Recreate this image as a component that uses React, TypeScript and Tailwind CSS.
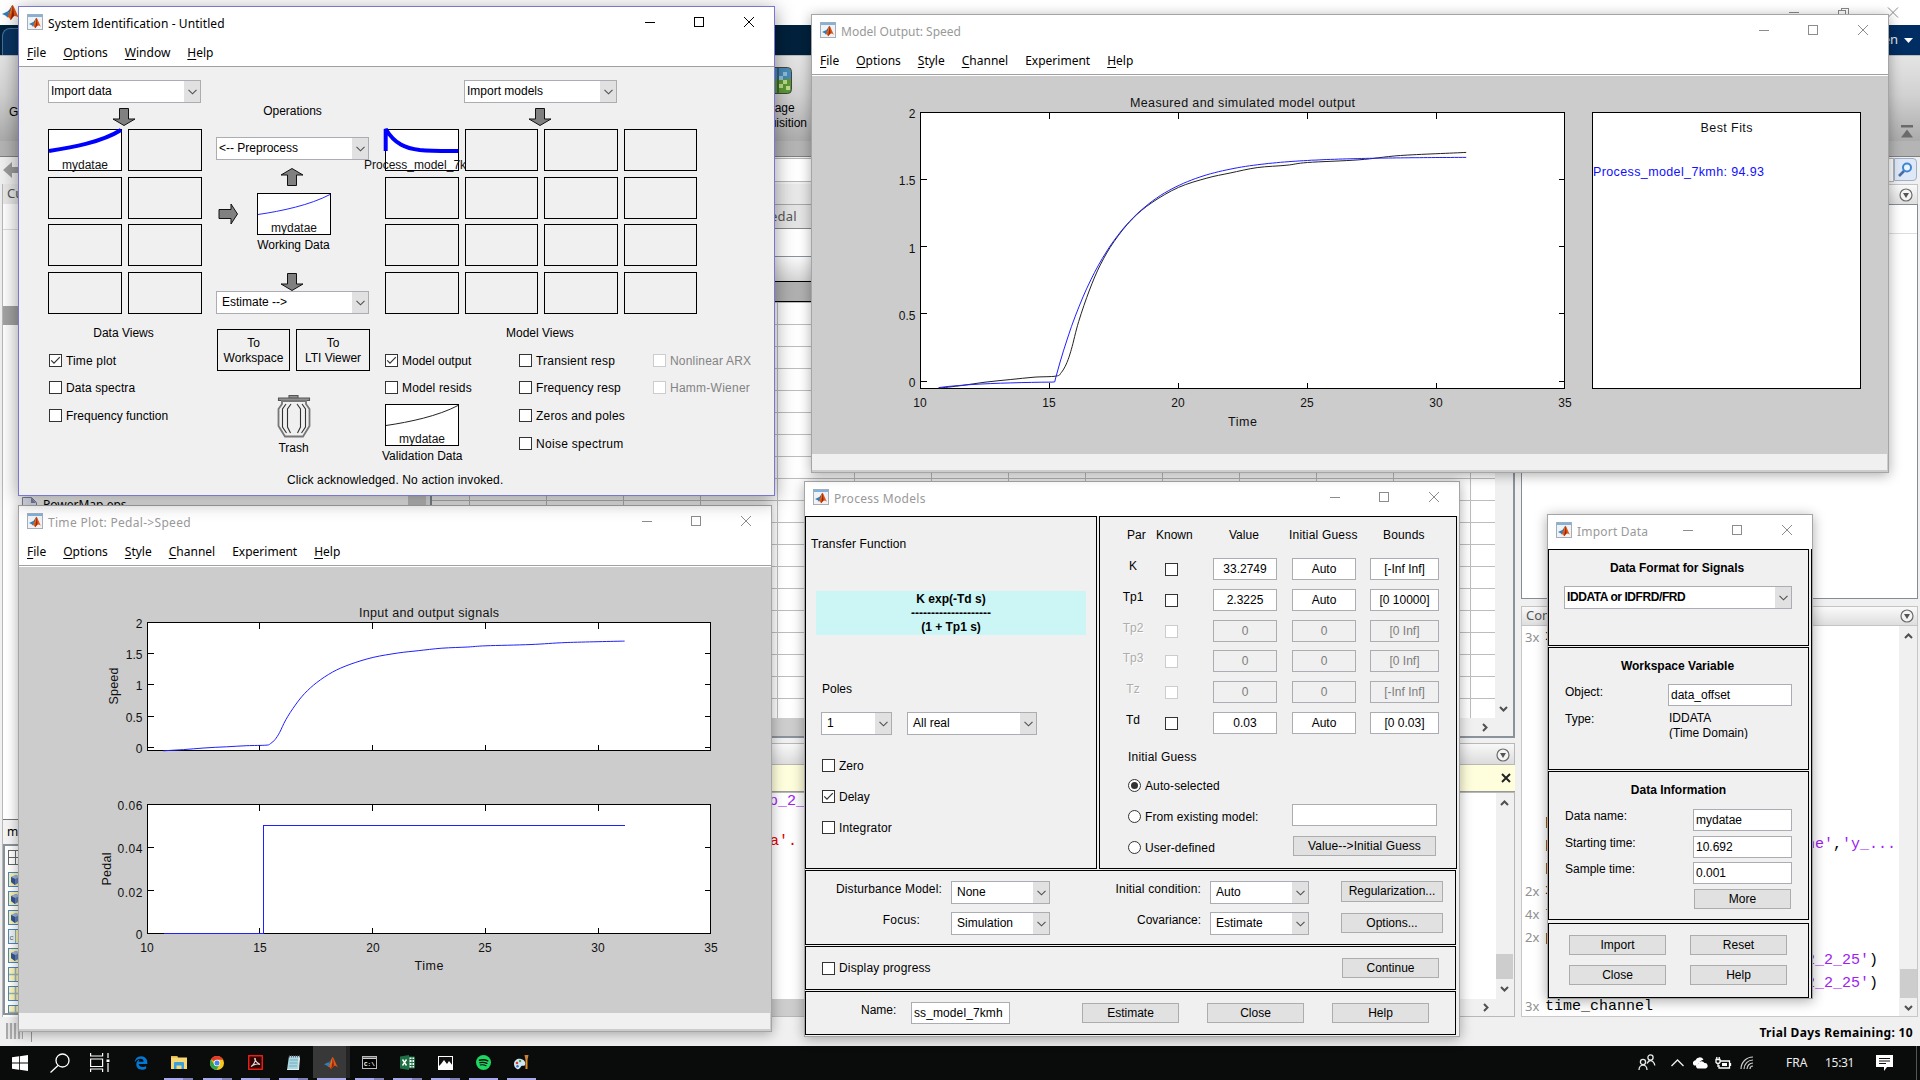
import React from "react";
import { FaEdgeLegacy } from "react-icons/fa6";

type Pt = [number, number];

/* ---------- shared drawing helpers ---------- */

function smooth(pts: Pt[]): string {
  let d = `M${pts[0][0].toFixed(1)} ${pts[0][1].toFixed(1)}`;
  for (let i = 0; i < pts.length - 1; i++) {
    const a = pts[Math.max(0, i - 1)];
    const b = pts[i];
    const c = pts[i + 1];
    const e = pts[Math.min(pts.length - 1, i + 2)];
    const k = 6;
    d += `C${(b[0] + (c[0] - a[0]) / k).toFixed(1)} ${(b[1] + (c[1] - a[1]) / k).toFixed(1)} ${(c[0] - (e[0] - b[0]) / k).toFixed(1)} ${(c[1] - (e[1] - b[1]) / k).toFixed(1)} ${c[0].toFixed(1)} ${c[1].toFixed(1)}`;
  }
  return d;
}

const measured: Pt[] = [
  [10.7, -0.05], [11.6, -0.03], [12.5, -0.005], [13.5, 0.015], [14.4, 0.032], [15.25, 0.04], [15.45, 0.065],
  [15.65, 0.13], [15.85, 0.24], [16.13, 0.446], [16.55, 0.68], [16.97, 0.867], [17.5, 1.04], [18.2, 1.207],
  [18.97, 1.33], [20, 1.443], [21.1, 1.512], [22, 1.55], [23.05, 1.59], [24.2, 1.608], [25, 1.628], [27, 1.648],
  [28.6, 1.68], [31.15, 1.703],
];

const simulated: Pt[] = (() => {
  const out: Pt[] = [];
  for (let t = 10.7; t < 15.15; t += 0.4) out.push([t, -0.045 * Math.exp(-(t - 10.7) / 1.9)]);
  out.push([15.2, -0.003]);
  for (let t = 15.25; t <= 31.2; t += 0.15) out.push([t, 1.668 * (1 - Math.exp(-(t - 15.2) / 2.3225))]);
  return out;
})();

const line = (pts: Pt[]) => "M" + pts.map((p) => `${p[0].toFixed(1)} ${p[1].toFixed(1)}`).join("L");

function MatlabGlyph({ size = 14 }: { size?: number }) {
  return (
    <svg width={size} height={size} viewBox="0 0 16 16">
      <path d="M0 9.300 5 7l2.800 2.200L5 12.600 3.600 11z" fill="#2f7fb8" />
      <path d="M5 7c1.800-.4 3.200-4 4.800-6L7.800 9.200z" fill="#3a5f8a" />
      <path d="M9.800 1C8.400 3 7.600 8 5 12.600c1.300-.6 2.200.6 3 2.400 1.600-.6 2.600-3.800 4-3.800 1.300 0 2.600.7 4 1.800C13.500 9 11.200 1 9.800 1z" fill="#dd5a12" />
      <path d="M9.800 1c.3 3-.2 8.500-1.800 14 1.500-1 2.200-3.600 3.400-3.900C11 7.500 10.600 2.500 9.800 1z" fill="#9c1f10" />
      <path d="M9.600 1.300C9 3.500 8.400 7 7.300 10c.9-1 1.900-5 2.300-8.700z" fill="#f9b13a" />
    </svg>
  );
}

function WindowIcon() {
  return (
    <div className="flex h-4 w-4 shrink-0 flex-col border border-[#a4aebb] bg-[#f1f2f5]">
      <div className="h-[2px] bg-[#7fb2dc]" />
      <div className="flex flex-1 items-center justify-center">
        <MatlabGlyph size={12} />
      </div>
    </div>
  );
}

function Caption({ color }: { color: string }) {
  return (
    <svg width="110" height="12" viewBox="0 0 110 12" fill="none" stroke={color} shapeRendering="crispEdges">
      <path d="M0 6.500h10M49.500 1.500h9v9h-9z" />
      <path d="M99 1l10 10M109 1L99 11" shapeRendering="auto" />
    </svg>
  );
}

interface WinProps {
  frame: string;
  title: string;
  titleClass?: string;
  active?: boolean;
  menu?: string[];
  titleH?: string;
  children: React.ReactNode;
}

/* menu entries with an "&" in front underline their first letter */
function Win({ frame, title, titleClass = "", active, menu, titleH = "h-[30px]", children }: WinProps) {
  return (
    <section
      className={
        "absolute flex flex-col border bg-white " +
        (active
          ? "border-[#7878d2] shadow-[0_4px_18px_rgba(0,0,0,0.42)] "
          : "border-[#a5a5a5] shadow-[0_2px_12px_rgba(0,0,0,0.33)] ") +
        frame
      }
    >
      <header className={"flex shrink-0 items-start pl-2 pr-[19px] " + titleH}>
        <div className="pt-[7px]">
          <WindowIcon />
        </div>
        <h1
          className={
            "ml-[5px] flex-1 whitespace-nowrap pt-[8px] font-['Noto_Sans',sans-serif] text-[12px] leading-[18px] " +
            (active ? "text-black " : "text-[#999] ") +
            titleClass
          }
        >
          {title}
        </h1>
        <div className="pt-[9px]">
          <Caption color={active ? "#000" : "#8c8c8c"} />
        </div>
      </header>
      {menu && (
        <nav className="flex h-[30px] shrink-0 gap-[17px] border-b border-[#a0a0a0] pl-2 pt-[7px] font-['Noto_Sans',sans-serif] text-[12px] leading-[18px]">
          {menu.map((m) =>
            m.startsWith("&") ? (
              <span key={m}>
                <span className="underline underline-offset-2">{m[1]}</span>
                {m.slice(2)}
              </span>
            ) : (
              <span key={m}>{m}</span>
            ),
          )}
        </nav>
      )}
      {children}
    </section>
  );
}

/* ---------- form controls ---------- */

function Select({ text, className = "", pad = "pl-[5px]" }: { text: string; className?: string; pad?: string }) {
  return (
    <div className={"flex h-[23px] shrink-0 border border-[#abadb3] bg-white " + className}>
      <span className={"flex-1 whitespace-nowrap leading-[21px] " + pad}>{text}</span>
      <span className="flex w-4 items-center justify-center bg-[#e1e1e1]">
        <svg width="9" height="6" viewBox="0 0 9 6" fill="none" stroke="#505050" strokeWidth="1.1">
          <path d="M.5.8l4 4 4-4" />
        </svg>
      </span>
    </div>
  );
}

function Box({ on, off }: { on?: boolean; off?: boolean }) {
  return (
    <span className={"flex h-[13px] w-[13px] shrink-0 items-center justify-center border bg-white " + (off ? "border-[#ccc]" : "border-[#333]")}>
      {on && (
        <svg width="11" height="11" viewBox="0 0 11 11" fill="none" stroke="#333" strokeWidth="1.2">
          <path d="M1.200 5.300l2.800 2.900 5.800-6" />
        </svg>
      )}
    </span>
  );
}

function Check({ label, on, off, className = "" }: { label: string; on?: boolean; off?: boolean; className?: string }) {
  return (
    <div className={"flex h-[13px] items-center gap-1 whitespace-nowrap " + (off ? "text-[#838383] " : "") + className}>
      <Box on={on} off={off} />
      <span>{label}</span>
    </div>
  );
}

function Radio({ label, on }: { label: string; on?: boolean }) {
  return (
    <div className="flex h-[13px] items-center gap-1 whitespace-nowrap">
      <span className="flex h-[13px] w-[13px] items-center justify-center rounded-full border border-[#333] bg-white">
        {on && <span className="h-[7px] w-[7px] rounded-full bg-[#333]" />}
      </span>
      <span className="pt-px tracking-[0.1px]">{label}</span>
    </div>
  );
}

function Field({ text = "", className = "", off }: { text?: string; className?: string; off?: boolean }) {
  return (
    <div
      className={
        "h-[22px] shrink-0 overflow-hidden whitespace-nowrap border border-[#abadb3] leading-[21px] " +
        (off ? "bg-[#f0f0f0] text-[#7d7d7d] " : "bg-white ") +
        className
      }
    >
      {text}
    </div>
  );
}

function Btn({ text, className = "h-[20px] w-[97px]" }: { text: string; className?: string }) {
  return (
    <div className={"shrink-0 whitespace-nowrap border border-[#adadad] bg-[#e1e1e1] text-center leading-[19px] " + className}>
      {text}
    </div>
  );
}

/* ---------- System Identification window ---------- */

function Arrow({ dir, className = "" }: { dir: "down" | "up" | "right"; className?: string }) {
  const rot = dir === "down" ? "" : dir === "up" ? "rotate(180 12 9)" : "";
  return dir === "right" ? (
    <svg className={className} width="21" height="22" viewBox="0 0 21 22">
      <path d="M1 6.500h12V1l6.500 10L13 21v-5.500H1z" fill="#808080" stroke="#111" />
    </svg>
  ) : (
    <svg className={className} width="24" height="18" viewBox="0 0 24 18">
      <path transform={rot} d="M7.500.5h9v10.500h6.500L12 17.500 1 11h6.500z" fill="#808080" stroke="#111" />
    </svg>
  );
}

function Slot({ kind, name }: { kind?: "data" | "model"; name?: string }) {
  return (
    <div className={"relative h-[42px] border border-black " + (kind ? "bg-white" : "")}>
      {kind && (
        <svg className="absolute -left-[2px] -top-[4px] overflow-visible" width="76" height="30" viewBox="0 0 76 30" fill="none" stroke="#0000ff" strokeWidth="4">
          {kind === "data" ? <path d="M2 25c22-3.500 52-8.500 72-21" /> : <path d="M1.700 25V3c9 15 20 19.500 34 21 12 1.200 24 1 38.500 1" strokeLinejoin="bevel" />}
        </svg>
      )}
      {name && (
        <span className={"absolute top-[28px] whitespace-nowrap text-[12px] leading-[14px] text-[#111] " + (kind === "model" ? "-left-[22px] w-[103px]" : "left-[13px]")}>
          {name}
        </span>
      )}
    </div>
  );
}

function Preview({ color }: { color: string }) {
  return (
    <div className="relative h-[42px] w-[74px] border border-black bg-white">
      <svg className="absolute left-0 top-0" width="72" height="40" viewBox="0 0 72 40" fill="none" stroke={color}>
        <path d="M0 20.500C24 17 52 11 72 .5" />
      </svg>
      <span className="absolute left-[13px] top-[27px] leading-[14px] text-[#111]">mydatae</span>
    </div>
  );
}

function Trash() {
  return (
    <svg width="34" height="45" viewBox="0 0 34 45" fill="none" stroke="#333" strokeWidth="1.100">
      <path d="M12 1.500h9v2.500h-9zM1.500 4h31v2.500h-31z" fill="#909090" stroke="#555" />
      <path d="M5 7v3l-3.500 5v17L8 42.500h18l6.500-10.500V15L29 10V7z" stroke="#777" strokeWidth="1.800" />
      <path d="M9 10l-3.500 5v18l4 6M14 10l-3.500 5v18l3 6M20 10l3.500 5v18l-3 6M25 10l3.500 5v18l-4 6" />
    </svg>
  );
}

function SystemId() {
  return (
    <Win
      frame="left-[18px] top-[6px] h-[490px] w-[757px]"
      title="System Identification - Untitled"
      titleClass="tracking-[0.08px]"
      active
      menu={["&File", "&Options", "&Window", "&Help"]}
    >
      <div className="flex flex-1 flex-col bg-[#f0f0f0] pl-[29px] pt-[13px]">
        <div className="flex h-[386px]">
          <div className="flex w-[154px] flex-col">
            <Select text="Import data" className="w-[153px]" pad="pl-[2px]" />
            <Arrow dir="down" className="ml-[64px] mt-[5px]" />
            <div className="mt-[3px] grid grid-cols-[74px_74px] gap-x-[6px] gap-y-[5.700px]">
              <Slot kind="data" name="mydatae" />
              {Array.from({ length: 7 }, (_, i) => (
                <Slot key={i} />
              ))}
            </div>
            <div className="mt-[11px] pr-[3px] text-center leading-[16px]">Data Views</div>
            <div className="mt-[13px] flex flex-col pl-[1px]">
              <Check label="Time plot" on className="tracking-[0.15px]" />
              <Check label="Data spectra" className="mt-[14px] tracking-[0.1px]" />
              <Check label="Frequency function" className="mt-[15px]" />
            </div>
          </div>
          <div className="ml-[14px] flex w-[155px] flex-col items-center">
            <div className="mt-[23px] pr-[2px] leading-[16px]">Operations</div>
            <Select text="<-- Preprocess" className="-ml-[2px] mt-[18px] w-[153px]" pad="pl-[2px]" />
            <Arrow dir="up" className="-ml-[3px] mt-[8px]" />
            <div className="mt-[7px] flex w-full items-center">
              <Arrow dir="right" className="ml-[2px]" />
              <div className="ml-[18px]">
                <Preview color="#2828ff" />
              </div>
            </div>
            <div className="mt-[2px] leading-[16px]">Working Data</div>
            <Arrow dir="down" className="-ml-[3px] mt-[20px]" />
            <Select text="Estimate -->" className="-ml-[2px] w-[153px]" />
            <div className="mt-[15px] flex gap-[6px] text-center leading-[15px]">
              <div className="h-[42px] w-[73px] border border-black pt-[6px]">
                To
                <br />
                Workspace
              </div>
              <div className="h-[42px] w-[74px] border border-black pt-[6px]">
                To
                <br />
                LTI Viewer
              </div>
            </div>
            <div className="mt-[23px]">
              <Trash />
            </div>
            <div className="mt-px leading-[16px]">Trash</div>
          </div>
          <div className="ml-[14px] flex w-[320px] flex-col">
            <Select text="Import models" className="ml-[79px] w-[153px]" pad="pl-[2px]" />
            <Arrow dir="down" className="ml-[143px] mt-[5px]" />
            <div className="mt-[3px] grid grid-cols-[74px_73px_74px_73px] gap-x-[6px] gap-y-[5.700px]">
              <Slot kind="model" name="Process_model_7kmh" />
              {Array.from({ length: 15 }, (_, i) => (
                <div key={i} className="relative bg-[#f0f0f0]">
                  <Slot />
                </div>
              ))}
            </div>
            <div className="mt-[11px] pl-[121px] leading-[16px]">Model Views</div>
            <div className="mt-[13px] grid grid-cols-[134px_134px_1fr]">
              <div>
                <Check label="Model output" on />
                <Check label="Model resids" className="mt-[14px] tracking-[0.15px]" />
                <div className="mt-[10px]">
                  <Preview color="#222" />
                </div>
                <div className="-ml-[3px] mt-[2px] leading-[16px]">Validation Data</div>
              </div>
              <div>
                <Check label="Transient resp" className="tracking-[0.2px]" />
                <Check label="Frequency resp" className="mt-[14px] tracking-[0.1px]" />
                <Check label="Zeros and poles" className="mt-[15px] tracking-[0.2px]" />
                <Check label="Noise spectrum" className="mt-[15px] tracking-[0.3px]" />
              </div>
              <div>
                <Check label="Nonlinear ARX" off className="tracking-[0.2px]" />
                <Check label="Hamm-Wiener" off className="mt-[14px] tracking-[0.25px]" />
              </div>
            </div>
          </div>
        </div>
        <div className="mt-[6px] pl-[239px] leading-[16px] tracking-[0.130px]">Click acknowledged. No action invoked.</div>
      </div>
    </Win>
  );
}

/* ---------- charts ---------- */

interface AxesProps {
  x0: number;
  x1: number;
  y0: number;
  y1: number;
  xt: number[];
  yt: number[];
}

function Axes({ x0, x1, y0, y1, xt, yt }: AxesProps) {
  return (
    <g shapeRendering="crispEdges" stroke="#000">
      <rect x={x0} y={y0} width={x1 - x0} height={y1 - y0} fill="#fff" />
      {xt.map((x) => (
        <path key={x} d={`M${x} ${y0}v6M${x} ${y1}v-6`} />
      ))}
      {yt.map((y) => (
        <path key={y} d={`M${x0} ${y}h6M${x1} ${y}h-6`} />
      ))}
    </g>
  );
}

function ModelOutput() {
  const X = (t: number) => 108.5 + (t - 10) * 25.8;
  const Y = (v: number) => 36.5 + (2 - v) * 134.5;
  const m = (p: Pt): Pt => [X(p[0]), Y(p[1])];
  return (
    <Win frame="left-[811px] top-[14px] h-[459px] w-[1078px]" title="Model Output: Speed" menu={["&File", "&Options", "&Style", "&Channel", "Experiment", "&Help"]}>
      <div className="mt-px flex h-[378px] shrink-0 bg-[#ccc]">
        <svg width="1076" height="378" viewBox="0 0 1076 378" fontFamily="Liberation Sans, Arial, sans-serif" fontSize="12" fill="#111">
          <Axes x0={108.5} x1={752.5} y0={36.5} y1={312.5} xt={[237.5, 366.5, 495.5, 624.5]} yt={[103.5, 170.5, 237.5, 305.5]} />
          <path d={smooth(measured.map(m))} fill="none" stroke="#222" />
          <path d={line(simulated.map(m))} fill="none" stroke="#2020ff" />
          <text x="430.500" y="31" textAnchor="middle" textLength="225" fontSize="12.500">Measured and simulated model output</text>
          {["2", "1.5", "1", "0.5", "0"].map((s, i) => (
            <text key={s} x="103.500" y={[42, 109, 177, 244, 311][i]} textAnchor="end">{s}</text>
          ))}
          {["10", "15", "20", "25", "30", "35"].map((s, i) => (
            <text key={s} x={[108, 237, 366, 495, 624, 753][i]} y="331" textAnchor="middle">{s}</text>
          ))}
          <text x="430.500" y="349.500" textAnchor="middle" textLength="29" fontSize="12.500">Time</text>
          <rect x="780.500" y="36.500" width="268" height="276" fill="#fff" stroke="#000" shapeRendering="crispEdges" />
          <text x="914.500" y="56" textAnchor="middle" textLength="52" fontSize="12.500">Best Fits</text>
          <text x="781" y="100" fill="#1010ff" textLength="171" fontSize="12.500">Process_model_7kmh: 94.93</text>
        </svg>
      </div>
      <div className="flex-1 border-b-2 border-r border-[#ccc] bg-[#f0f0f0]" />
    </Win>
  );
}

function TimePlot() {
  const X = (t: number) => 128.5 + (t - 10) * 22.56;
  const Y = (v: number) => 55.5 + (2 - v) * 62.6;
  const xt = [240.5, 353.5, 466.5, 579.5];
  return (
    <Win
      frame="left-[18px] top-[505px] h-[527px] w-[754px]"
      title="Time Plot: Pedal->Speed"
      titleClass="tracking-[0.3px]"
      menu={["&File", "&Options", "&Style", "&Channel", "Experiment", "&Help"]}
    >
      <div className="mt-px flex h-[446px] shrink-0 bg-[#ccc]">
        <svg width="752" height="446" viewBox="0 0 752 446" fontFamily="Liberation Sans, Arial, sans-serif" fontSize="12" fill="#111">
          <Axes x0={128.5} x1={691.5} y0={55.5} y1={183.5} xt={xt} yt={[86.5, 117.5, 149.5, 180.5]} />
          <path d={smooth(measured.map((p): Pt => [X(p[0]), Y(p[1])]))} fill="none" stroke="#2020ff" />
          <Axes x0={128.5} x1={691.5} y0={237.5} y1={366.5} xt={xt} yt={[280.5, 323.5]} />
          <path d="M144.500 366.500h100V258.500h361" fill="none" stroke="#2020ff" shapeRendering="crispEdges" />
          <text x="410" y="50" textAnchor="middle" textLength="140" fontSize="12.500">Input and output signals</text>
          {["2", "1.5", "1", "0.5", "0"].map((s, i) => (
            <text key={s} x="123.500" y={[61, 92, 123, 155, 186][i]} textAnchor="end">{s}</text>
          ))}
          {["0.06", "0.04", "0.02", "0"].map((s, i) => (
            <text key={s} x="123.500" y={[243, 286, 330, 372][i]} textAnchor="end" textLength={s.length > 1 ? 25 : undefined}>{s}</text>
          ))}
          {["10", "15", "20", "25", "30", "35"].map((s, i) => (
            <text key={s} x={[128, 241, 354, 466, 579, 692][i]} y="385" textAnchor="middle">{s}</text>
          ))}
          <text x="410" y="403" textAnchor="middle" textLength="29" fontSize="12.500">Time</text>
          <text transform="translate(99 119) rotate(-90)" textAnchor="middle" textLength="37" fontSize="12.500">Speed</text>
          <text transform="translate(91.500 302) rotate(-90)" textAnchor="middle" textLength="33" fontSize="12.500">Pedal</text>
        </svg>
      </div>
      <div className="flex-1 border-b-2 border-r border-[#ccc] bg-[#f0f0f0]" />
    </Win>
  );
}

/* ---------- Process Models window ---------- */

const params: { p: string; v: string; g: string; b: string; off?: boolean }[] = [
  { p: "K", v: "33.2749", g: "Auto", b: "[-Inf Inf]" },
  { p: "Tp1", v: "2.3225", g: "Auto", b: "[0 10000]" },
  { p: "Tp2", v: "0", g: "0", b: "[0 Inf]", off: true },
  { p: "Tp3", v: "0", g: "0", b: "[0 Inf]", off: true },
  { p: "Tz", v: "0", g: "0", b: "[-Inf Inf]", off: true },
  { p: "Td", v: "0.03", g: "Auto", b: "[0 0.03]" },
];

function ProcessModels() {
  return (
    <Win frame="left-[804px] top-[481px] h-[556px] w-[656px]" title="Process Models" titleH="h-[34px]" titleClass="tracking-[0.3px]">
      <div className="flex flex-1 flex-col bg-[#f0f0f0]">
        <div className="flex h-[353px] gap-[2px]">
          <div className="flex w-[292px] flex-col border border-black">
            <div className="mt-[19px] pl-[5px] leading-[16px] tracking-[0.1px]">Transfer Function</div>
            <div className="ml-[10px] mt-[39px] h-[44px] w-[270px] bg-[#ccf5f5] pt-px text-center font-bold leading-[14px] text-black">
              <div>K exp(-Td s)</div>
              <div>--------------------</div>
              <div>(1 + Tp1 s)</div>
            </div>
            <div className="mt-[46px] pl-[16px] leading-[16px]">Poles</div>
            <div className="mt-[15px] flex gap-[15px] pl-[15px]">
              <Select text="1" className="w-[71px]" />
              <Select text="All real" className="w-[130px]" />
            </div>
            <div className="mt-[24px] flex flex-col gap-[18px] pl-[16px]">
              <Check label="Zero" />
              <Check label="Delay" on />
              <Check label="Integrator" className="tracking-[0.150px]" />
            </div>
          </div>
          <div className="flex w-[358px] flex-col border border-black pl-[13px]">
            <div className="mt-[10px] flex leading-[16px]">
              <span className="w-[29px] pl-[14px]">Par</span>
              <span className="ml-[14px] w-[38px]">Known</span>
              <span className="ml-[35px] w-[32px]">Value</span>
              <span className="ml-[28px] w-[69px] whitespace-nowrap tracking-[0.200px]">Initial Guess</span>
              <span className="ml-[25px] tracking-[0.150px]">Bounds</span>
            </div>
            <div className="mt-[15px] flex flex-col gap-[8.800px]">
              {params.map((r) => (
                <div key={r.p} className="flex h-[22px]">
                  <span className={"w-[40px] text-center leading-[16px] " + (r.off ? "text-[#adadad] [text-shadow:1px_1px_0_#fff]" : "")}>{r.p}</span>
                  <span className="ml-[12px] mt-[5px]">
                    <Box off={r.off} />
                  </span>
                  <Field text={r.v} off={r.off} className="ml-[35px] w-[64px] text-center" />
                  <Field text={r.g} off={r.off} className="ml-[15px] w-[64px] text-center" />
                  <Field text={r.b} off={r.off} className="ml-[14px] w-[69px] text-center" />
                </div>
              ))}
            </div>
            <div className="mt-[15px] pl-[15px] leading-[16px] tracking-[0.200px]">Initial Guess</div>
            <div className="mt-[14px] flex pl-[15px]">
              <div className="flex w-[164px] flex-col gap-[18px]">
                <Radio label="Auto-selected" on />
                <Radio label="From existing model:" />
                <Radio label="User-defined" />
              </div>
              <div className="flex flex-col gap-[10px] pt-[25px]">
                <Field className="w-[145px]" />
                <Btn text="Value-->Initial Guess" className="ml-px h-[20px] w-[143px] tracking-[0.100px]" />
              </div>
            </div>
          </div>
        </div>
        <div className="mt-px flex h-[75px] w-[651px] border border-black pt-[10px]">
          <div className="flex w-[136px] flex-col items-end leading-[16px]">
            <span className="whitespace-nowrap tracking-[0.150px]">Disturbance Model:</span>
            <span className="mt-[15px] pr-[22px] tracking-[0.200px]">Focus:</span>
          </div>
          <div className="ml-[9px] flex flex-col gap-[8px]">
            <Select text="None" className="w-[99px]" />
            <Select text="Simulation" className="w-[99px]" />
          </div>
          <div className="ml-[50px] flex w-[101px] flex-col items-end leading-[16px]">
            <span className="whitespace-nowrap tracking-[0.150px]">Initial condition:</span>
            <span className="mt-[15px]">Covariance:</span>
          </div>
          <div className="ml-[9px] flex flex-col gap-[8px]">
            <Select text="Auto" className="w-[99px]" />
            <Select text="Estimate" className="w-[99px]" />
          </div>
          <div className="ml-[32px] flex flex-col gap-[11px]">
            <Btn text="Regularization..." className="h-[21px] w-[102px]" />
            <Btn text="Options..." className="h-[20px] w-[102px]" />
          </div>
        </div>
        <div className="mt-px flex h-[44px] w-[651px] items-center justify-between border border-black pl-[16px] pr-[16px]">
          <Check label="Display progress" className="tracking-[0.150px]" />
          <Btn text="Continue" />
        </div>
        <div className="mt-px flex h-[44px] w-[651px] items-start border border-black pl-[55px] pt-[9px]">
          <span className="w-[40px] leading-[18px]">Name:</span>
          <Field text="ss_model_7kmh" className="ml-[10px] mt-px w-[99px] pl-[2px] tracking-[0.1px]" />
          <div className="ml-[72px] mt-[2px] flex gap-[28px]">
            <Btn text="Estimate" />
            <Btn text="Close" />
            <Btn text="Help" />
          </div>
        </div>
      </div>
    </Win>
  );
}

/* ---------- Import Data window ---------- */

function ImportData() {
  return (
    <Win frame="left-[1547px] top-[514px] h-[485px] w-[266px]" title="Import Data" titleH="h-[34px]" titleClass="tracking-[0.2px]">
      <div className="flex flex-1 bg-[#f0f0f0]">
        <div className="flex w-[261px] flex-col">
          <div className="flex h-[97px] flex-col border border-black">
            <div className="mt-[10px] pr-[3px] text-center font-bold leading-[16px] tracking-[-0.050px]">Data Format for Signals</div>
            <Select text="IDDATA or IDFRD/FRD" className="ml-[15px] mt-[10px] w-[228px] font-bold tracking-[-0.430px]" pad="pl-[2px]" />
          </div>
          <div className="mt-px flex h-[123px] flex-col border border-black">
            <div className="mt-[10px] pr-[2px] text-center font-bold leading-[16px]">Workspace Variable</div>
            <div className="mt-[10px] flex pl-[16px]">
              <span className="w-[103px] leading-[16px]">Object:</span>
              <Field text="data_offset" className="w-[124px] pl-[2px]" />
            </div>
            <div className="mt-[5px] flex pl-[16px]">
              <span className="w-[104px] leading-[16px]">Type:</span>
              <div className="h-[28px] overflow-hidden leading-[15px]">
                IDDATA
                <br />
                (Time Domain)
              </div>
            </div>
          </div>
          <div className="mt-px flex h-[149px] flex-col border border-black">
            <div className="mt-[10px] text-center font-bold leading-[16px]">Data Information</div>
            <div className="mt-[11px] flex flex-col gap-[4.500px] pl-[16px]">
              {[
                ["Data name:", "mydatae"],
                ["Starting time:", "10.692"],
                ["Sample time:", "0.001"],
              ].map(([a, b]) => (
                <div key={a} className="flex">
                  <span className="w-[128px] leading-[15px]">{a}</span>
                  <Field text={b} className="w-[99px] pl-[2px]" />
                </div>
              ))}
            </div>
            <Btn text="More" className="ml-[145px] mt-[5px] h-[20px] w-[97px]" />
          </div>
          <div className="mt-[3px] grid h-[75px] grid-cols-[97px_97px] content-start gap-x-[24px] gap-y-[10px] border border-black pl-[20px] pt-[11px]">
            <Btn text="Import" />
            <Btn text="Reset" />
            <Btn text="Close" />
            <Btn text="Help" />
          </div>
        </div>
        <div className="ml-[2px] w-px bg-black" />
      </div>
    </Win>
  );
}

/* ---------- MATLAB main window behind the dialogs ---------- */

function RoundMenu() {
  return (
    <svg width="14" height="14" viewBox="0 0 14 14">
      <circle cx="7" cy="7" r="6" fill="#f4f4f4" stroke="#6a6a6a" strokeWidth="1.200" />
      <path d="M4 5h6l-3 5z" fill="#555" />
    </svg>
  );
}

function Chevron({ d }: { d: string }) {
  return (
    <svg width="9" height="9" viewBox="0 0 9 9" fill="none" stroke="#505050" strokeWidth="2">
      <path d={d} />
    </svg>
  );
}

const UP = "M1 6l3.500-3.500L8 6";
const DOWN = "M1 3l3.500 3.500L8 3";
const RIGHT = "M3 1l3.500 3.500L3 8";

function CubeIcon() {
  return (
    <svg width="15" height="15" viewBox="0 0 15 15">
      <rect x=".5" y=".5" width="14" height="14" fill="#f7efb2" stroke="#4d88bd" />
      <path d="M3 5l5-2 4 2v5l-5 3-4-3z" fill="#5f7fb4" />
      <path d="M3 5l4 2 5-2-4-2z" fill="#9bb3d8" />
      <path d="M7 7v6l-4-3V5z" fill="#35558f" />
    </svg>
  );
}

function GridIcon({ plain, text }: { plain?: boolean; text?: string }) {
  return (
    <svg width="15" height="15" viewBox="0 0 15 15">
      <rect x=".5" y=".5" width="14" height="14" fill={plain ? "#fff" : text ? "#eef3f0" : "#fbf4ba"} stroke={plain ? "#666" : "#4d88bd"} />
      {text ? (
        <g>
          <rect x="7" y="1" width="7" height="13" fill="#f4eeb4" />
          <path d="M7.500 1v13" stroke="#8fb0b0" />
          <text x="1.500" y="11" fontSize="8" fontFamily="Liberation Sans, sans-serif" fill="#567">{text}</text>
        </g>
      ) : (
        <path d="M7.500 1v13M1 7.500h13" stroke={plain ? "#666" : "#9cb4b4"} strokeWidth={plain ? 1 : 1.600} />
      )}
    </svg>
  );
}

const history: { n?: string; l?: string; r?: React.ReactNode; pr?: string }[] = [
  { n: "3x", l: "x" },
  {}, {}, {}, {}, {}, {}, {},
  { l: "p" },
  { l: "p", r: (<><i className="not-italic text-[#a020f0]">ne'</i>,<i className="not-italic text-[#a020f0]">'y_...</i></>), pr: "pr-[3px]" },
  { l: "p" },
  { n: "2x", l: "x" },
  { n: "4x", l: "t" },
  { n: "2x", l: "p" },
  { r: (<><i className="not-italic text-[#a020f0]">2_2_25'</i>)</>), pr: "pr-[21px]" },
  { r: (<><i className="not-italic text-[#a020f0]">2_2_25'</i>)</>), pr: "pr-[21px]" },
  { n: "3x", l: "time_channel" },
];

function MainWindow() {
  return (
    <div className="flex h-[1046px] w-full flex-col bg-[#f0f0f0] font-['Noto_Sans',sans-serif] text-[12px] text-black">
      <div className="flex h-[25px] items-center justify-between bg-white pl-[2px] pr-[21px]">
        <MatlabGlyph size={17} />
        <svg width="110" height="14" viewBox="0 0 110 14" fill="none" stroke="#888">
          <path d="M0 6.500h10M49.500 4.500h7v7h-7zM52 4.500v-2h7v7h-2.500" shapeRendering="crispEdges" />
          <path d="M99 1.500l10 10M109 1.500l-10 10" />
        </svg>
      </div>
      <div className="flex h-[30px] items-end justify-between bg-[linear-gradient(90deg,#00213c_0,#00213c_50%,#002d62_95%)]">
        <div className="ml-[2px] h-[27px] w-[120px] rounded-tl-lg border-l border-t border-[#46719b] bg-[#0a3360]" />
        <div className="flex h-[30px] items-center gap-[6px] pr-[7px] text-[13px] text-[#e8e8e8]">
          Open
          <svg width="9" height="5" viewBox="0 0 9 5">
            <path d="M0 0h9L4.500 5z" fill="#fff" />
          </svg>
        </div>
      </div>
      <div className="flex h-[86px] border-t border-[#bbb] bg-[linear-gradient(#e4e4e4,#d2d2d2_45%,#ababab)] pt-[11px]">
        <span className="w-[60px] pl-[9px] pt-[36px] font-['Liberation_Sans',sans-serif]">Get</span>
        <div className="ml-[673px] flex w-[90px] flex-col items-center font-['Liberation_Sans',sans-serif] leading-[15px]">
          <svg width="28" height="27" viewBox="0 0 28 27">
            <rect x=".5" y=".5" width="27" height="26" rx="4" fill="#5c9a35" stroke="#444" />
            <path d="M1 4q1-3 4-3h18q3 0 4 3v8H1z" fill="#4a8ab8" />
            <path d="M15 9h4v4h-4zM19 5h4v4h-4z" fill="#8fc0dc" />
            <path d="M15 17h4v4h-4zM19 13h4v4h-4zM22 19h4v4h-4z" fill="#bfdc8c" />
            <path d="M14 1v25" stroke="#234" />
          </svg>
          <span className="mt-[7px]">Image</span>
          <span>Acquisition</span>
        </div>
        <div className="ml-auto flex items-end pb-[3px] pr-[7px]">
          <svg width="12" height="13" viewBox="0 0 12 13">
            <path d="M0 0h12v2.500H0zM6 4.500L12 12.500H0z" fill="#6a6a6a" />
          </svg>
        </div>
      </div>
      <div className="h-[16px] border-b border-[#7f7f7f] bg-[#b4b4b4]" />
      <div className="flex h-[25px] items-center justify-between bg-[#f0f0f0] pl-[3px] pr-[3px]">
        <svg width="20" height="16" viewBox="0 0 20 16">
          <path d="M0 8l9-8v5h11v6H9v5z" fill="#9b9b9b" />
        </svg>
        <div className="ml-3 h-[24px] flex-1 border border-[#b5b5b5] bg-white" />
        <div className="flex h-[23px] w-[23px] items-center justify-center rounded-r border border-[#9fb0cb] bg-[#dfe8f6]">
          <svg width="15" height="15" viewBox="0 0 15 15" fill="none">
            <circle cx="9" cy="5.500" r="4" stroke="#3f86cf" strokeWidth="2" fill="#e8f4ff" />
            <path d="M6 9l-5 5" stroke="#4a6fa8" strokeWidth="2.600" />
          </svg>
        </div>
      </div>
      <div className="flex h-[835px] pt-[2px]">
        {/* folder, details and workspace column */}
        <div className="ml-[2px] flex w-[424px] shrink-0 flex-col border-l border-[#b8b8b8] bg-white">
          <div className="flex h-[20px] items-center bg-[#e9e9e9] pl-[4px] text-[13px] text-[#555]">Current Folder</div>
          <div className="h-[26px] border-b border-[#ddd]" />
          <div className="h-[76px]" />
          <div className="h-[19px] bg-[#a3a3a3]" />
          <div className="h-[171px]" />
          <div className="flex h-[324px] justify-between border-b border-[#777]">
            <div className="flex h-[20px] items-start gap-[6px] pl-[19px] pt-[1px] leading-[16px]">
              <svg width="15" height="16" viewBox="0 0 15 16">
                <path d="M.5.5h9l5 5v10H.5z" fill="#eef1fa" stroke="#8088a8" />
                <path d="M9 .5v5.500h5z" fill="#8088c0" />
              </svg>
              PowerMap.eps
            </div>
            <div className="w-[18px] bg-[#cdcdcd]" />
          </div>
          <div className="flex h-[24px] items-center bg-[#f4f4f4] pl-[4px]">matlab (Details)</div>
          <div className="flex h-[171px] flex-col overflow-hidden border-2 border-[#8a929c] bg-white pl-[3px] pt-[4px]">
            <div className="mb-[7px] h-[17px]">
              <GridIcon plain />
            </div>
            <div className="flex flex-col gap-[4px]">
              <CubeIcon />
              <CubeIcon />
              <CubeIcon />
              <GridIcon text="c" />
              <CubeIcon />
              <GridIcon />
              <GridIcon />
              <GridIcon />
            </div>
          </div>
        </div>
        {/* variable editor and command window */}
        <div className="ml-[4px] flex w-[1085px] shrink-0 flex-col">
          <div className="h-[21px] border-b border-[#a8a8a8] bg-[#e8e8e8]" />
          <div className="flex h-[24px] items-center border-b border-[#888] bg-[#e4e4e4] pl-[332px] text-[13px] tracking-[0.200px] text-[#555]">Pedal</div>
          <div className="h-[27px] bg-white" />
          <div className="flex h-[482px] border-b-2 border-l-2 border-r-2 border-t border-[#8a929c]">
            <div className="flex flex-1 flex-col">
              <div className="h-[25px] border-b border-black bg-[linear-gradient(#fafafa,#d4d4d4)]" />
              <div className="h-[20px] border-b border-black bg-[#b0b0b0]" />
              <div className="flex-1 bg-white bg-[linear-gradient(90deg,transparent_76px,#bdbdbd_76px),linear-gradient(transparent_21px,#bdbdbd_21px)] bg-[length:77px_22px] bg-[position:-39px_1px]" />
              <div className="flex h-[18px] items-center justify-end bg-[#cdcdcd]">
                <div className="flex h-full w-[60px] items-center justify-end bg-[#f0f0f0] pr-[6px]">
                  <Chevron d={RIGHT} />
                </div>
              </div>
            </div>
            <div className="flex w-[18px] flex-col items-center justify-end bg-[#f0f0f0] pb-[23px] pr-[1px]">
              <Chevron d={DOWN} />
            </div>
          </div>
          <div className="mt-[5px] flex h-[22px] items-center justify-end border border-[#b8b8b8] bg-[linear-gradient(#f8f8f8,#dcdcdc)] pr-[4px] pt-px">
            <RoundMenu />
          </div>
          <div className="flex h-[27px] items-center justify-end border-b border-[#999] bg-[#fffedc] pr-[4px] pb-px">
            <svg width="10" height="10" viewBox="0 0 10 10" stroke="#222" strokeWidth="2">
              <path d="M1 1l8 8M9 1L1 9" />
            </svg>
          </div>
          <div className="flex h-[225px] border border-[#b8b8b8] bg-white">
            <div className="flex flex-1 flex-col font-['Liberation_Mono',monospace] text-[15px]">
              <div className="h-[18px] pl-[338px] leading-[18px] text-[#a020f0]">p_2_2_25</div>
              <div className="mt-[21px] h-[20px] pl-[339px] leading-[20px] text-[#e00000]">a'.</div>
              <div className="flex-1" />
              <div className="flex h-[17px] items-center justify-end bg-[#cdcdcd]">
                <div className="flex h-full w-[60px] items-center justify-end bg-[#f0f0f0] pr-[6px]">
                  <Chevron d={RIGHT} />
                </div>
              </div>
            </div>
            <div className="flex w-[18px] flex-col items-center bg-[#f0f0f0] pb-[20px] pr-px pt-[6px]">
              <Chevron d={UP} />
              <div className="mt-[146px] h-[25px] w-[17px] shrink-0 bg-[#cdcdcd]" />
              <div className="mt-[5px]">
                <Chevron d={DOWN} />
              </div>
            </div>
          </div>
        </div>
        {/* workspace and command history */}
        <div className="ml-[6px] mr-[2px] flex flex-1 flex-col">
          <div className="flex h-[20px] items-center justify-end border border-b-0 border-[#c4c4c4] bg-[linear-gradient(#fafafa,#dedede)] pr-[4px] pt-px">
            <RoundMenu />
          </div>
          <div className="h-[396px] border border-[#858c96] bg-white">
            <div className="h-[29px] border-b border-[#ddd]" />
          </div>
          <div className="mt-[7px] flex h-[20px] shrink-0 items-center justify-between border border-[#c4c4c4] bg-[linear-gradient(#fafafa,#dedede)] pl-[4px] pr-[3px] text-[13px] text-[#555]">
            Command History
            <RoundMenu />
          </div>
          <div className="flex h-[391px] shrink-0 border border-t-0 border-[#c8c8c8] bg-white">
            <div className="flex flex-1 flex-col">
              {history.map((h, i) => (
                <div key={i} className={"flex h-[23.100px] shrink-0 items-center whitespace-pre font-['Liberation_Mono',monospace] text-[15px] " + (h.pr ?? "")}>
                  <span className="w-[23px] pl-[3px] font-['Noto_Sans',sans-serif] text-[13px] text-[#909090]">{h.n ?? ""}</span>
                  <span>{h.l ?? ""}</span>
                  <span className="ml-auto">{h.r}</span>
                </div>
              ))}
            </div>
            <div className="flex w-[18px] flex-col items-center bg-[#f0f0f0] pt-[6px]">
              <Chevron d={UP} />
              <div className="mt-[328px] h-[29px] w-[17px] shrink-0 bg-[#cdcdcd]" />
              <div className="mt-[5px]">
                <Chevron d={DOWN} />
              </div>
            </div>
          </div>
        </div>
      </div>
      <div className="flex h-[28px] items-start justify-between pl-[6px] pr-[7px] pt-[6px]">
        <div className="flex items-start gap-[2px]">
          <div className="h-[16px] w-[17px] bg-[repeating-linear-gradient(90deg,#aaa_0_2px,#e4e4e4_2px_4px)]" />
          <span className="text-[8px]">▴</span>
          <div className="mt-[5px] h-[14px] w-px bg-[#999]" />
        </div>
        <span className="whitespace-nowrap text-[12px] font-bold leading-[20px] tracking-[0.330px]">Trial Days Remaining: 10</span>
      </div>
    </div>
  );
}

/* ---------- Taskbar ---------- */

function TaskItem({ children, running, stacked, active }: { children: React.ReactNode; running?: boolean; stacked?: boolean; active?: boolean }) {
  return (
    <div className="flex h-full w-[38.100px] flex-col items-center">
      <div className={"flex w-full flex-1 items-center justify-center " + (active ? "bg-[linear-gradient(90deg,transparent_1px,#383838_1px_34px,#242424_34px)]" : "")}>
        <div className="mt-[1px]">{children}</div>
      </div>
      <div className="flex h-[2px] w-[29px]">
        {running && <div className="flex-1 bg-[#a9a9ee]" />}
        {running && stacked && <div className="w-[10px] bg-[#8080b4]" />}
      </div>
    </div>
  );
}

function Taskbar() {
  return (
    <footer className="flex h-[34px] w-full bg-[#0a0b0b]">
      <div className="flex pl-[1px]">
        <TaskItem>
          <svg width="16" height="16" viewBox="0 0 16 16" fill="#fff">
            <path d="M0 2.300l7-1v6.300H0zM7.800 1.200L16 0v7.600H7.800zM0 8.400h7v6.300l-7-1zM7.800 8.400H16V16l-8.200-1.200z" />
          </svg>
        </TaskItem>
        <div className="w-[2px]" />
        <TaskItem>
          <svg width="20" height="20" viewBox="0 0 20 20" fill="none" stroke="#fff" strokeWidth="1.300">
            <circle cx="12.500" cy="7.500" r="6.500" />
            <path d="M8 12.500L.5 19.500" />
          </svg>
        </TaskItem>
        <div className="w-[2px]" />
        <TaskItem>
          <svg width="20" height="19" viewBox="0 0 20 19" fill="none" stroke="#fff" strokeWidth="1.200">
            <path d="M.6 0v3h12V0M.6 19v-3h12v3M.6 6h12v7.500H.6zM18 0v5M18 10v9" />
            <path d="M16.500 6.500h3v2.500h-3z" fill="#fff" stroke="none" />
          </svg>
        </TaskItem>
        <div className="w-[2.500px]" />
        <TaskItem>
          <FaEdgeLegacy size={14} color="#0078d7" />
        </TaskItem>
        <TaskItem running stacked>
          <svg width="16" height="15" viewBox="0 0 16 15">
            <path d="M0 1h6l1 1.500h9V14H0z" fill="#f8d775" />
            <path d="M0 1h6l1 1.500H0z" fill="#e8b84a" />
            <path d="M3 14V8q0-1 1-1h8q1 0 1 1v6h-2.500v-3.500h-5V14z" fill="#3aa0dd" />
          </svg>
        </TaskItem>
        <TaskItem running stacked>
          <svg width="14" height="14" viewBox="0 0 14 14">
            <circle cx="7" cy="7" r="7" fill="#f9c81c" />
            <path d="M7 7L1 3.400A7 7 0 0 1 13.200 3.800H7z" fill="#e23b2e" />
            <path d="M1 3.400A7 7 0 0 0 6.500 14L9.500 8.500 4.200 8.400z" fill="#30a350" />
            <circle cx="7" cy="7" r="3.200" fill="#fff" />
            <circle cx="7" cy="7" r="2.500" fill="#4286f4" />
          </svg>
        </TaskItem>
        <TaskItem running stacked>
          <svg width="15" height="15" viewBox="0 0 15 15" fill="none">
            <rect x=".75" y=".75" width="13.500" height="13.500" fill="#300" stroke="#f02018" strokeWidth="1.400" />
            <path d="M3 11.500c2.500-1.500 5-6 4.200-8 -1-1-.8 3 4.800 6-2-1-6 0-9 2z" stroke="#ddd" strokeWidth="1.100" />
          </svg>
        </TaskItem>
        <TaskItem running stacked>
          <svg width="15" height="16" viewBox="0 0 15 16">
            <path d="M3 1h11l-2 14H1z" fill="#a9d8e2" />
            <path d="M12.500 2H14l-1 13H1l.2-1H12z" fill="#e6eef0" />
            <path d="M3 1.500h11" stroke="#667" strokeDasharray="1 1" strokeWidth="2" />
            <path d="M4 5h8M3.500 8h8M3 11h8" stroke="#7ab" />
          </svg>
        </TaskItem>
        <TaskItem running active>
          <MatlabGlyph size={14} />
        </TaskItem>
        <TaskItem running stacked>
          <svg width="15" height="13" viewBox="0 0 15 13">
            <rect x=".5" y=".5" width="14" height="12" fill="#000" stroke="#bbb" />
            <path d="M1 1.500h13v1.500H1z" fill="#ccc" />
            <text x="2" y="9.500" fontSize="6" fontFamily="Liberation Mono, monospace" fontWeight="bold" fill="#fff">C:\</text>
          </svg>
        </TaskItem>
        <TaskItem running stacked>
          <svg width="15" height="15" viewBox="0 0 15 15">
            <path d="M9 2h5.500v11H9z" fill="#fff" stroke="#1e7145" />
            <path d="M9.500 4.500h5M9.500 7.500h5M9.500 10.500h5M12 2v11" stroke="#1e7145" />
            <path d="M0 1.500L9 0v15l-9-1.500z" fill="#1e7145" />
            <path d="M2.500 4.500l4 6M6.500 4.500l-4 6" stroke="#fff" strokeWidth="1.400" />
          </svg>
        </TaskItem>
        <TaskItem running stacked>
          <svg width="15" height="14" viewBox="0 0 15 14">
            <rect x=".5" y=".5" width="14" height="13" fill="#111" stroke="#fff" />
            <path d="M0 11l3-3 3-4 3 4 2-3 4 5v4H0z" fill="#fff" />
          </svg>
        </TaskItem>
        <TaskItem running>
          <svg width="15" height="15" viewBox="0 0 15 15" fill="none" stroke="#0a0b0b" strokeLinecap="round">
            <circle cx="7.500" cy="7.500" r="7.500" fill="#1ed760" stroke="none" />
            <path d="M3.500 5.200c3-.9 6-.6 8.200.6" strokeWidth="1.500" />
            <path d="M3.900 7.700c2.500-.7 5-.4 7 .7" strokeWidth="1.300" />
            <path d="M4.200 10c2.200-.5 4-.3 5.800.7" strokeWidth="1.100" />
          </svg>
        </TaskItem>
        <TaskItem running>
          <svg width="15" height="15" viewBox="0 0 15 15">
            <path d="M0 9c0-4 4-6 7-5 4 1 5 4 4 6-1 1.500-3 0-4 1.500S5 15 3 14 0 11 0 9z" fill="#cfe6f4" />
            <circle cx="3" cy="8" r="1.300" fill="#e23b2e" />
            <circle cx="6" cy="6" r="1.200" fill="#3aa050" />
            <circle cx="3.500" cy="11.300" r="1.200" fill="#2a70c8" />
            <path d="M11.500 5h2v9h-2z" fill="#e08a28" />
            <path d="M10.500 0h4l-1 5h-2z" fill="#c9813a" />
          </svg>
        </TaskItem>
      </div>
      <div className="ml-auto flex items-center font-['Noto_Sans',sans-serif] text-[12px] text-[#eee]">
        <svg width="18" height="18" viewBox="0 0 18 18" fill="none" stroke="#e8e8e8" strokeWidth="1.300">
          <circle cx="5" cy="8" r="2.600" />
          <path d="M1 16c0-3 2-5 4-5s4 2 4 5" />
          <circle cx="12.500" cy="3.500" r="2.600" />
          <path d="M9 9.500c1-2 2-3 3.500-3s4 2 4.300 5" />
        </svg>
        <svg className="ml-[15px]" width="13" height="8" viewBox="0 0 13 8" fill="none" stroke="#eee" strokeWidth="1.300">
          <path d="M.5 7l6-6 6 6" />
        </svg>
        <svg className="ml-[8px]" width="17" height="12" viewBox="0 0 16 12" fill="#fff">
          <path d="M1.500 8.500A3 3 0 0 1 3 3.200 4.500 4.500 0 0 1 11 2.500 L8 4 4 8.500z" />
          <path d="M5 11.500a2.500 2.500 0 0 1 .6-4.800A3.500 3.500 0 0 1 12 6a2.800 2.800 0 0 1 1 5.500z" />
        </svg>
        <svg className="ml-[6px]" width="17" height="13" viewBox="0 0 17 13" fill="none" stroke="#fff" strokeWidth="1.300">
          <path d="M5 4h9.500v7H4V8M15.500 6v3" />
          <path d="M7 6h5v3H7z" fill="#fff" stroke="none" />
          <path d="M1 2.500h4v3q-2 2-4 0zM1.800 0v2.500M4.200 0v2.500M3 7v3" />
        </svg>
        <svg className="ml-[8px]" width="14" height="14" viewBox="0 0 14 14" fill="none" stroke="#ccc" strokeWidth="1.200">
          <path d="M1 13A12 12 0 0 1 13 1M4 13a9 9 0 0 1 9-9M7 13a6 6 0 0 1 6-6M10 13a3 3 0 0 1 3-3" />
        </svg>
        <span className="ml-[32px] w-[39px]">FRA</span>
        <span className="w-[51px] whitespace-nowrap tracking-[-0.300px]">15:31</span>
        <svg width="17" height="16" viewBox="0 0 17 16">
          <path d="M0 0h17v12h-6l-3 4v-4H0z" fill="#fff" />
          <path d="M3 3.500h11M3 6h11M3 8.500h7" stroke="#111" />
        </svg>
        <div className="ml-[23px] h-full w-px bg-[#555]" />
        <div className="w-[3px]" />
      </div>
    </footer>
  );
}

export default function App() {
  return (
    <main className="relative flex h-[1080px] w-[1920px] flex-col overflow-hidden bg-[#f0f0f0] font-['Liberation_Sans',Arial,sans-serif] text-[12px] text-black">
      <MainWindow />
      <ImportData />
      <ProcessModels />
      <ModelOutput />
      <TimePlot />
      <SystemId />
      <Taskbar />
    </main>
  );
}
